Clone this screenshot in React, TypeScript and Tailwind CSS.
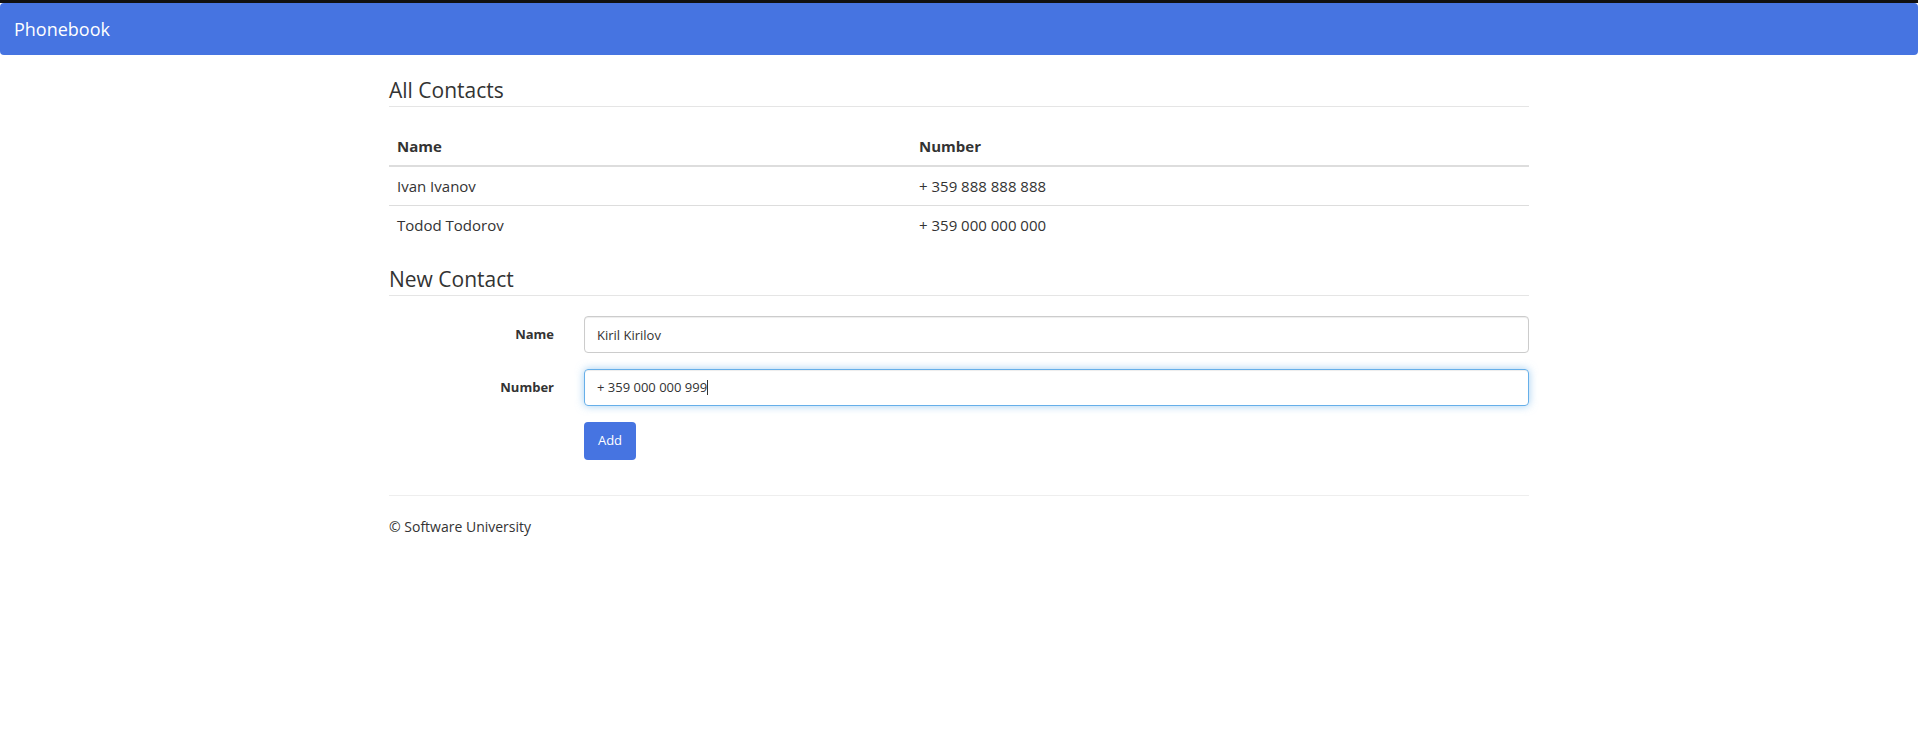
export default function App() {
  const contacts = [
    { name: 'Ivan Ivanov', number: '+ 359 888 888 888' },
    { name: 'Todod Todorov', number: '+ 359 000 000 000' },
  ]

  return (
    <div className="min-h-[738px] bg-white text-[#333] font-['Open_Sans',sans-serif]">
      <div className="h-[3px] bg-[#111]" />
      <nav className="h-[52px] bg-[#4674e1] rounded-[4px] flex items-center pl-[14px]">
        <span className="text-white text-[18px] leading-none">Phonebook</span>
      </nav>

      <div className="w-[1140px] mx-auto">
        <h2 className="mt-[20px] h-[32px] border-b border-[#e5e5e5] text-[21px] leading-[31px] mb-[20px]">All Contacts</h2>
        <table className="w-full text-[15px] mb-[20px]">
          <thead>
            <tr className="border-b-2 border-[#ddd]">
              <th className="w-[522px] text-left font-bold px-[8px] h-[39px]">Name</th>
              <th className="text-left font-bold px-[8px] h-[39px]">Number</th>
            </tr>
          </thead>
          <tbody>
            {contacts.map((contact, index) => (
              <tr key={index} className={index > 0 ? 'border-t border-[#ddd]' : ''}>
                <td className="px-[8px] h-[39px]">{contact.name}</td>
                <td className="px-[8px] h-[39px]">{contact.number}</td>
              </tr>
            ))}
          </tbody>
        </table>

        <h2 className="h-[32px] border-b border-[#e5e5e5] text-[21px] leading-[31px] mb-[20px]">New Contact</h2>
        <div className="flex flex-col gap-[16px] text-[13px]">
          <div className="flex items-center gap-[30px]">
            <label className="w-[165px] text-right font-bold">Name</label>
            <input
              readOnly
              value="Kiril Kirilov"
              className="flex-1 h-[37px] px-[12px] border border-[#ccc] rounded-[4px] text-[#333] shadow-[inset_0_1px_1px_rgba(0,0,0,0.075)] outline-none"
            />
          </div>
          <div className="flex items-center gap-[30px]">
            <label className="w-[165px] text-right font-bold">Number</label>
            <div className="flex-1 h-[37px] px-[12px] border border-[#66afe9] rounded-[4px] flex items-center shadow-[inset_0_1px_1px_rgba(0,0,0,0.075),0_0_8px_rgba(102,175,233,0.6)]">
              <span>+ 359 000 000 999</span>
              <span className="w-px h-[15px] bg-[#333]" />
            </div>
          </div>
          <div className="flex gap-[30px]">
            <div className="w-[165px]" />
            <button className="h-[38px] w-[52px] bg-[#4674e1] text-white text-[13px] rounded-[4px]">Add</button>
          </div>
        </div>

        <hr className="mt-[35px] border-t border-[#eee]" />
        <footer className="mt-[20px] text-[14px] leading-[21px]">© Software University</footer>
      </div>
    </div>
  )
}
